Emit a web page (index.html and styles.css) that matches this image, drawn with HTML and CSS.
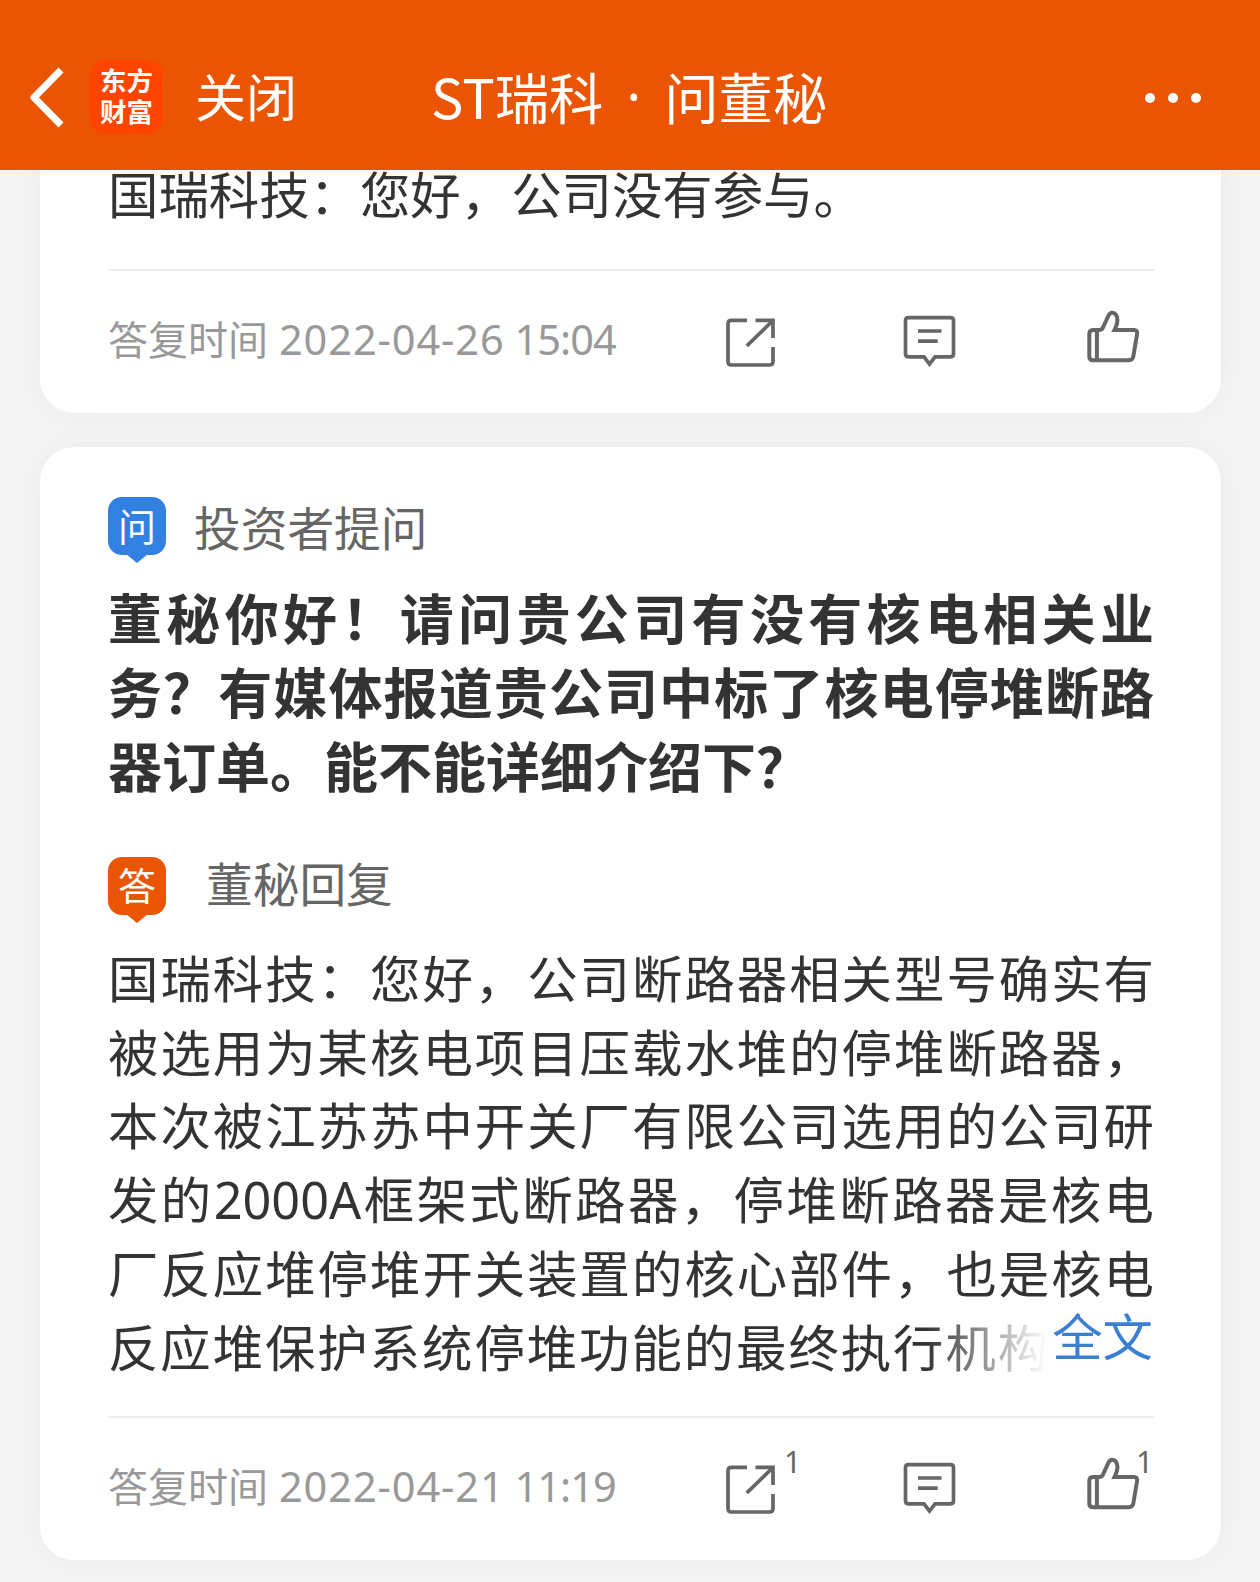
FILE: index.html
```
<!DOCTYPE html>
<html lang="zh-CN">
	<head>
		<meta charset="UTF-8">
		<meta name="viewport" content="width=device-width, initial-scale=1">
		<title>ST瑞科 · 问董秘</title>
		<link rel="stylesheet" href="styles.css">
	</head>

	<body>
		<!-- shared icons -->
		<svg class="sprite" xmlns="http://www.w3.org/2000/svg">
			<symbol id="icon-share" viewBox="0 0 56 60">
				<path d="M23 11.3H7.500Q4 11.300 4 14.800V52.500Q4 56 7.500 56H45.500Q49 56 49 52.500V38M31.500 11.300H49V29M48.500 12L22.800 36.800"/>
			</symbol>
			<symbol id="icon-comment" viewBox="0 0 56 60">
				<path d="M7.500 8.700H49.500Q52.500 8.700 52.500 11.700V44.800Q52.500 47.800 49.500 47.800H34L28.500 55L23 47.800H7.500Q4.500 47.800 4.500 44.800V11.700Q4.500 8.700 7.500 8.700ZM17 22H40.500M17 32.200H36.700"/>
			</symbol>
			<symbol id="icon-like" viewBox="0 0 56 60">
				<path d="M8 21H14Q17 21 18 18.500L23.500 6.500C25.500 2.500 30.500 3 32 8C33.500 13.500 31.500 17 29.500 21H49Q52.700 21 52.100 25L48.300 47.500Q47.600 51.300 44 51.300H8Q4.300 51.300 4.300 47.500V25Q4.300 21 8 21ZM11.900 21V51"/>
			</symbol>
		</svg>

		<div class="page">
			<header class="header">
				<svg class="back" viewBox="0 0 40 64"><path d="M34 5L7 32.500L34 60"/></svg>
				<div class="logo"><span>东方</span><span>财富</span></div>
				<span class="close">关闭</span>
				<h1 class="title"><span>ST瑞科</span><span class="dot">·</span><span>问董秘</span></h1>
				<div class="more"><i></i><i></i><i></i></div>
			</header>

			<main class="list">
				<article class="card card-first">
					<p class="answer">国瑞科技：您好，公司没有参与。</p>
					<footer class="foot">
						<div class="time">答复时间 <span class="date">2022-04-26</span> <span class="clock">15:04</span></div>
						<div class="action"><svg class="icon"><use href="#icon-share"/></svg></div>
						<div class="action"><svg class="icon"><use href="#icon-comment"/></svg></div>
						<div class="action"><svg class="icon icon-like"><use href="#icon-like"/></svg></div>
					</footer>
				</article>

				<article class="card">
					<div class="who"><span class="tag tag-ask">问</span><span class="name">投资者提问</span></div>
					<h2 class="question">
						<span class="line">董秘你好！请问贵公司有没有核电相关业</span>
						<span class="line">务？有媒体报道贵公司中标了核电停堆断路</span>
						<span class="line line-last">器订单。能不能详细介绍下？</span>
					</h2>
					<div class="who who-reply"><span class="tag tag-reply">答</span><span class="name">董秘回复</span></div>
					<div class="answer answer-clamp">
						<span class="line">国瑞科技：您好，公司断路器相关型号确实有</span>
						<span class="line">被选用为某核电项目压载水堆的停堆断路器，</span>
						<span class="line">本次被江苏苏中开关厂有限公司选用的公司研</span>
						<span class="line">发的<span class="latin">2000A</span>框架式断路器，停堆断路器是核电</span>
						<span class="line">厂反应堆停堆开关装置的核心部件，也是核电</span>
						<span class="line line-cut">反应堆保护系统停堆功能的最终执行机构</span>
						<a class="all">全文</a>
					</div>
					<footer class="foot">
						<div class="time">答复时间 <span class="date">2022-04-21</span> <span class="clock">11:19</span></div>
						<div class="action"><svg class="icon"><use href="#icon-share"/></svg><sup class="count">1</sup></div>
						<div class="action"><svg class="icon"><use href="#icon-comment"/></svg></div>
						<div class="action"><svg class="icon icon-like"><use href="#icon-like"/></svg><sup class="count count-like">1</sup></div>
					</footer>
				</article>
			</main>
		</div>
	</body>
</html>
```
FILE: styles.css
```
* { box-sizing: border-box; }
body, html { margin: 0; padding: 0; }
body {
	font-family: "Noto Sans CJK SC", sans-serif;
	color: #333;
	background: #f5f5f5;
	text-spacing-trim: space-all;
}
h1, h2, p { margin: 0; }
.sprite { display: none; }
.page { height: 1582px; overflow: hidden; }

/* Header */
.header {
	display: flex;
	align-items: center;
	height: 170px;
	padding: 24px 59px 0 27px;
	color: #fff;
	background: #ea5504;
}
.back { width: 40px; height: 64px; fill: none; stroke: #fff; stroke-width: 7; stroke-linejoin: round; }
.logo {
	display: flex;
	flex-direction: column;
	align-items: center;
	justify-content: center;
	width: 73px;
	height: 74px;
	margin-left: 23px;
	padding-bottom: 4px;
	border-radius: 15px;
	font-size: 26.5px;
	font-weight: 700;
	line-height: 31px;
	background: #ff4400;
}
.close { margin: -5px 0 0 32px; font-size: 51px; line-height: 74px; }
.title { display: flex; margin: -3px 0 0 134px; font-size: 54.3px; font-weight: 400; line-height: 74px; }
.title .dot { width: 61px; font-family: "Noto Sans", sans-serif; text-align: center; }
.more { display: flex; gap: 12.5px; margin: 2px 0 0 auto; }
.more i { width: 10.5px; height: 10.5px; border-radius: 50%; background: #fff; }

/* Cards */
.list { height: 1412px; padding: 0 39px 0 40px; overflow: hidden; }
.card {
	margin-bottom: 34px;
	padding: 50px 67px 0 68px;
	border-radius: 34px;
	background: #fff;
	box-shadow: 0 0 34px rgba(0, 0, 0, .05);
}
.card-first { margin-top: -40px; padding-top: 26px; }
.card-first .foot { margin-top: 39px; }
.who { display: flex; align-items: center; height: 58px; font-size: 46.7px; line-height: 58px; color: #666; }
.who-reply { margin-top: 55px; }
.who-reply .name { margin-top: -7px; }
.tag {
	position: relative;
	width: 58px;
	height: 58px;
	margin-right: 28px;
	border-radius: 14px;
	font-size: 38px;
	line-height: 55px;
	text-align: center;
	color: #fff;
}
.tag:after {
	position: absolute;
	left: 18px;
	top: 57px;
	border: 11px solid transparent;
	border-top: 9px solid;
	border-bottom: 0;
	content: "";
}
.tag-ask { background: #3280e2; }
.tag-ask:after { border-top-color: #3280e2; }
.tag-reply { margin-right: 40px; line-height: 53px; background: #ea5504; }
.tag-reply:after { border-top-color: #ea5504; }
.question { margin-top: 25px; font-size: 54px; font-weight: 700; line-height: 74px; }
.answer { font-size: 50.4px; line-height: 73.8px; }
.line { display: block; text-align: justify; text-align-last: justify; white-space: nowrap; }
.line-last { text-align-last: left; }
.latin { font-family: "Noto Sans", sans-serif; line-height: 1; }
.answer-clamp { position: relative; margin-top: 25px; }
.line-cut { text-align-last: left; letter-spacing: 1.95px; }
.all {
	position: absolute;
	right: 1px;
	bottom: 11px;
	padding-left: 126px;
	color: #3b7fd0;
	background: linear-gradient(to right, rgba(255, 255, 255, 0), #fff 120px);
}

/* Card footer */
.foot {
	display: grid;
	grid-template-columns: 616px 177px 184px 56px;
	margin-top: 33px;
	padding: 38px 0 44px;
	border-top: 2px solid #eee;
}
.time { padding-top: 2px; font-size: 40px; line-height: 54px; color: #999; white-space: nowrap; }
.date, .clock { font-family: "Noto Sans", sans-serif; font-size: 41.5px; line-height: 1; }
.date { margin-left: 2px; letter-spacing: .9px; }
.clock { margin-left: 1px; letter-spacing: -1px; }
.action { position: relative; height: 60px; }
.icon { display: block; width: 56px; height: 60px; fill: none; stroke: #666; stroke-width: 3.7; }
.icon-like { stroke-width: 4; }
.count { position: absolute; left: 60px; top: -12px; font: 30px/36px "Noto Sans", sans-serif; color: #666; }
.count-like { left: 51px; }
```
